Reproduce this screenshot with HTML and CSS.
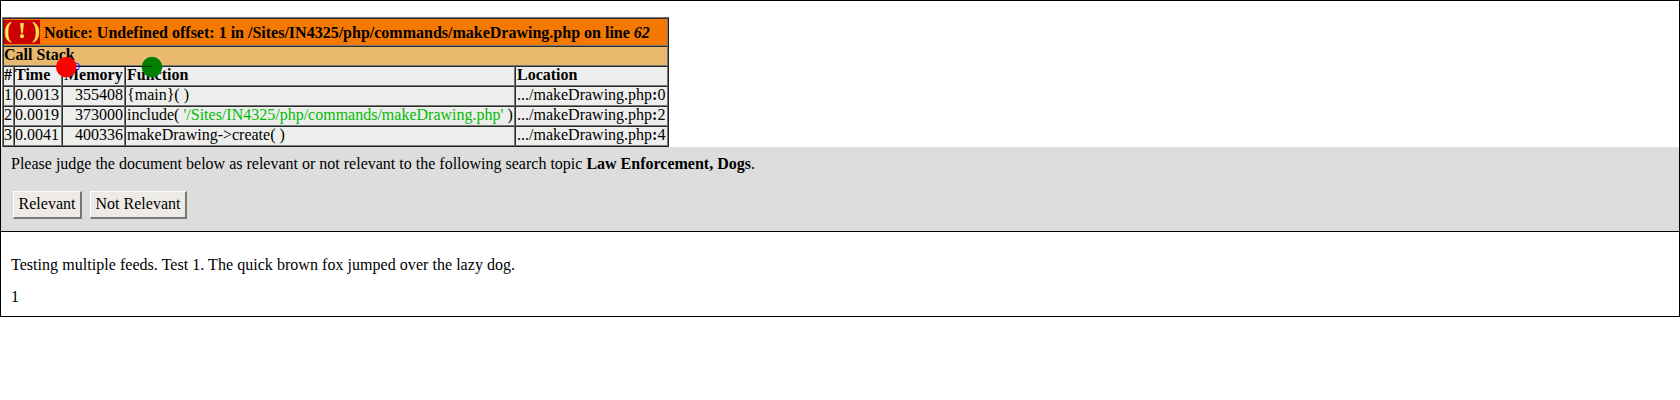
FILE: index.html
```html
<!DOCTYPE html>
<html lang="en">
<head>
<meta charset="utf-8">
<title>Judge document</title>
<link rel="stylesheet" href="styles.css">
</head>
<body>
<main class="frame">
  <table class="notice">
    <colgroup><col class="c-num"><col class="c-time"><col class="c-mem"><col class="c-func"><col class="c-loc"></colgroup>
    <tr class="title"><th colspan="5"><div class="headline"><span class="bang">( ! )</span><span class="msg">Notice: Undefined offset: 1 in /Sites/IN4325/php/commands/makeDrawing.php on line <i>62</i></span></div></th></tr>
    <tr class="stack"><th colspan="5">Call Stack</th></tr>
    <tr><th>#</th><th class="time">Time</th><th>Memory</th><th>Function</th><th>Location</th></tr>
    <tr><td>1</td><td class="time">0.0013</td><td class="num">355408</td><td>{main}( )</td><td>.../makeDrawing.php<b>:</b>0</td></tr>
    <tr><td>2</td><td class="time">0.0019</td><td class="num">373000</td><td>include( <span class="path">'/Sites/IN4325/php/commands/makeDrawing.php'</span> )</td><td>.../makeDrawing.php<b>:</b>2</td></tr>
    <tr><td>3</td><td class="time">0.0041</td><td class="num">400336</td><td>makeDrawing-&gt;create( )</td><td>.../makeDrawing.php<b>:</b>4</td></tr>
  </table>
  <svg class="drawing" width="120" height="30" viewBox="50 52 120 30">
    <circle cx="152" cy="67" r="10.3" fill="#008000"/>
    <path d="M66 66.5H152" stroke="#000" stroke-opacity=".65" fill="none"/>
    <circle cx="76" cy="66.5" r="3.5" stroke="#00f" stroke-width=".8" fill="none"/>
    <path d="M74 66.5H80.5" stroke="#00f" stroke-width="1"/>
    <circle cx="66.3" cy="67" r="10.3" fill="#f00"/>
  </svg>
  <section class="judge">
    <p class="ask">Please judge the document below as relevant or not relevant to the following search topic <b>Law Enforcement, Dogs</b>.</p>
    <div class="actions"><button class="btn rel">Relevant</button><button class="btn notrel">Not Relevant</button></div>
  </section>
  <section class="document">
    <p>Testing multiple feeds. Test 1. The quick brown fox jumped over the lazy dog.</p>
    <p>1</p>
  </section>
</main>
</body>
</html>
```
FILE: styles.css
```css
* { box-sizing: border-box; }
body {
  margin: 0;
  background: #fff;
  color: #000;
  font: 16px/18px "Liberation Serif", serif;
}
.frame {
  position: relative;
  height: 317px;
  padding-top: 16px;
  border: 1px solid #000;
}
.notice {
  width: 667px;
  margin-left: 1px;
  table-layout: fixed;
  border-collapse: separate;
  border-spacing: 0;
  border: 1px solid;
  border-color: #777 #222 #222 #777;
  white-space: nowrap;
}
.c-num { width: 11px; }
.c-time { width: 48px; }
.c-mem { width: 63px; }
.c-func { width: 390px; }
.c-loc { width: 153px; }
.notice tr { height: 20px; }
.notice th, .notice td {
  padding: 0 0 2px 1px;
  background: #eeeeec;
  border: 1px solid;
  border-color: #2c2c2c #777 #777 #2c2c2c;
  text-align: left;
  line-height: 16px;
  height: 20px;
}
.notice .num { text-align: right; padding-right: 1px; }
.notice th:first-child, .notice td:first-child { padding-left: 0; }
.notice .time { padding-left: 0; }
.notice .title th { height: 28px; padding: 0; background: #f57900; }
.notice .stack th { background: #e9b96e; }
.headline {
  display: flex;
  align-items: center;
  gap: 4px;
}
.bang {
  width: 36px;
  height: 24px;
  background: #c00;
  color: #fce94f;
  font-size: 24px;
  line-height: 20px;
}
.msg { padding-top: 2px; }
.path { color: #00bb00; }
.drawing {
  position: absolute;
  left: 49px;
  top: 51px;
}
.judge {
  height: 85px;
  padding: 8px 10px 0;
  background: #ddd;
  border-bottom: 1px solid #000;
}
.judge p { margin: 0; }
.actions {
  display: flex;
  gap: 8px;
  margin: 18px 0 0 2px;
}
.btn {
  height: 28px;
  padding: 0 0 2px;
  background: #eeebe7;
  color: #000;
  font: inherit;
  border: 1px solid;
  border-width: 1px 2px 2px 1px;
  border-color: #fff #777 #777 #fff;
  white-space: nowrap;
}
.rel { width: 69px; }
.notrel { width: 97px; }
.document { padding: 24px 10px 0; letter-spacing: .04px; }
.document p { margin: 0 0 14px; }
```
